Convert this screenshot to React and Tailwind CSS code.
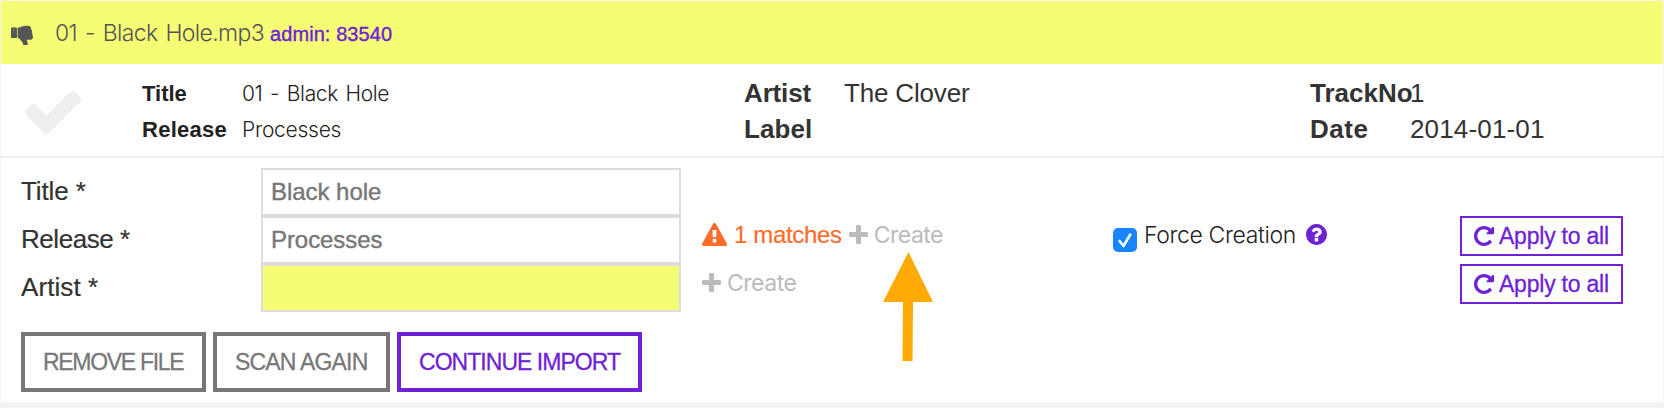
const icons = {
  repeat: {
    box: '128 128 1536 1536',
    d: 'M1664 256v448q0 26-19 45t-45 19h-448q-42 0-59-40-17-39 14-69l138-138q-148-137-349-137-104 0-198.5 40.5t-163.5 109.5-109.5 163.5-40.5 198.5 40.5 198.5 109.5 163.5 163.5 109.5 198.5 40.5q119 0 225-52t179-147q7-10 23-12 15 0 25 9l137 138q9 8 9.5 20.5t-7.5 22.5q-109 132-264 204.5t-327 72.5q-156 0-298-61t-245-164-164-245-61-298 61-298 164-245 245-164 298-61q147 0 284.5 55.5t244.5 156.5l130-129q29-31 70-14 39 17 39 59z',
  },
  check: {
    box: '121 334 1550 1188',
    d: 'M1671 566q0 40-28 68l-724 724-136 136q-28 28-68 28t-68-28l-136-136-362-362q-28-28-28-68t28-68l136-136q28-28 68-28t68 28l294 295 656-657q28-28 68-28t68 28l136 136q28 28 28 68z',
  },
  plus: {
    box: '192 128 1408 1408',
    d: 'M1600 736v192q0 40-28 68t-68 28h-416v416q0 40-28 68t-68 28h-192q-40 0-68-28t-28-68v-416h-416q-40 0-68-28t-28-68v-192q0-40 28-68t68-28h416v-416q0-40 28-68t68-28h192q40 0 68 28t28 68v416h416q40 0 68 28t28 68z',
  },
  warning: {
    box: '0 0 1792 1664',
    d: 'M1024 1375v-190q0-14-9.5-23.5t-22.5-9.5h-192q-13 0-22.5 9.5t-9.5 23.5v190q0 14 9.5 23.5t22.5 9.5h192q13 0 22.5-9.5t9.5-23.5zm-2-374l18-459q0-12-10-19-13-11-24-11h-220q-11 0-24 11-10 7-10 21l17 457q0 10 10 16.5t24 6.5h185q14 0 23.5-6.5t10.5-16.5zm-14-934l768 1408q35 63-2 126-17 29-46.5 46t-63.5 17h-1536q-34 0-63.5-17t-46.5-46q-37-63-2-126l768-1408q17-31 47-49t65-18 65 18 47 49z',
  },
  question: {
    box: '128 128 1536 1536',
    d: 'M1024 1376v-192q0-14-9-23t-23-9h-192q-14 0-23 9t-9 23v192q0 14 9 23t23 9h192q14 0 23-9t9-23zm256-672q0-88-55.5-163t-138.5-116-170-41q-243 0-371 213-15 24 8 42l132 100q7 6 19 6 16 0 25-12 53-68 86-92 34-24 86-24 48 0 85.5 26t37.5 59q0 38-20 61t-68 45q-63 28-115.5 86.5t-52.5 125.5v36q0 14 9 23t23 9h192q14 0 23-9t9-23q0-19 21.5-49.5t54.5-49.5q32-18 49-28.5t46-35 44.5-48 28-60.5 12.5-81zm384 192q0 209-103 385.5t-279.5 279.5-385.5 103-385.5-103-279.5-279.5-103-385.5 103-385.5 279.5-279.5 385.5-103 385.5 103 279.5 279.5 103 385.5z',
  },
  thumbsDown: {
    box: '64 128 1600 1536',
    d: 'M290 576q0 14-10 24t-24 10-24-10-10-24 10-24 24-10 24 10 10 24zm206 512v-640q0-26-19-45t-45-19h-304q-26 0-45 19t-19 45v640q0 26 19 45t45 19h304q26 0 45-19t19-45zm1113-149q55 61 55 149-1 78-57.5 135t-134.5 57h-277q4 14 8 24t11 22 10 18q18 37 27 57t19 58.5 10 76.5q0 24-.5 39t-5 45-12 50-24 45-40 40.5-60 26-82.5 10.5q-26 0-45-19-20-20-34-50t-19.5-52-12.5-61q-9-42-13.5-60.5t-17.5-48.5-31-48q-33-33-101-120-49-64-101-121t-76-59q-25-2-43-20.5t-18-43.5v-641q0-26 19-44.5t45-19.5q35-1 158-44 77-26 120.5-39.5t121.5-29 144-15.5h129q133 2 197 78 58 69 49 181 39 37 54 94 17 61 0 117 46 61 43 137 0 32-15 76z',
  },
};

function Icon({ name, className }) {
  return (
    <svg viewBox={icons[name].box} preserveAspectRatio="none" fill="currentColor" className={`block shrink-0 ${className}`}>
      <path d={icons[name].d} />
    </svg>
  );
}

function Fact({ label, value, labelClass, valueClass = '' }) {
  return (
    <div className="flex">
      <dt className={`w-[100px] shrink-0 font-bold ${labelClass}`}>{label}</dt>
      <dd className={valueClass}>{value}</dd>
    </div>
  );
}

function FormRow({ label, labelClass, value, valueClass = '', fieldClass = 'bg-white', children }) {
  return (
    <div className="flex h-12 items-start">
      <label className={`w-[240px] shrink-0 text-[26px] leading-[47px] [-webkit-text-stroke:0.2px] ${labelClass}`}>{label}</label>
      <div className={`h-12 w-[420px] shrink-0 border-2 border-[#dddddd] pl-[8px] text-[24px] leading-[43px] text-[#777777] [-webkit-text-stroke:0.4px] ${fieldClass} ${valueClass}`}>
        {value}
      </div>
      {children}
    </div>
  );
}

function Create() {
  return (
    <span className="flex items-center text-[#bbbbbb]">
      <Icon name="plus" className="h-[19px] w-[19px]" />
      <span className="relative top-px ml-[6px] font-['Inter',sans-serif] text-[23px] font-normal tracking-[-0.5px]">Create</span>
    </span>
  );
}

function ApplyToAll() {
  return (
    <button className="flex h-10 w-[163px] shrink-0 items-center border-2 border-[#6e22d4] pl-[12px] text-[23px] leading-[36px] tracking-[-0.22px] text-[#6e22d4] [-webkit-text-stroke:0.3px]">
      <Icon name="repeat" className="h-[20px] w-[20px]" />
      <span className="ml-[5px] whitespace-nowrap">Apply to all</span>
    </button>
  );
}

export default function App() {
  return (
    <div className="relative h-[408px] w-[1664px] overflow-hidden bg-[#f4f4f4] px-px pt-px font-['Liberation_Sans',Arial,sans-serif] text-[#333333]">
      <div className="h-[401px] bg-white">
        <header className="flex h-[63px] items-center bg-[#f5fd74] pl-[10px]">
          <Icon name="thumbsDown" className="mt-[3px] h-[21px] w-[22px] text-[#555555]" />
          <div className="mt-[2px] ml-[22px] flex items-baseline whitespace-nowrap">
            <span className="font-['Inter',sans-serif] text-[23px] font-light tracking-[-0.65px] text-[#555555] [word-spacing:2.2px]">01 - Black Hole.mp3</span>
            <span className="ml-[6px] text-[20px] tracking-[0.08px] text-[#6e22d4] [-webkit-text-stroke:0.4px]">admin: 83540</span>
          </div>
        </header>

        <section className="flex h-[94px] border-b-2 border-[#eeeeee] pt-[11px] leading-[36px] whitespace-nowrap">
          <div className="w-[141px] shrink-0 pt-[16px] pl-[24px]">
            <Icon name="check" className="h-[43px] w-[56px] text-[#eeeeee]" />
          </div>
          <dl className="w-[602px] shrink-0 pt-px text-[#222222]">
            <Fact label="Title" value="01 - Black Hole" labelClass="text-[22px]" valueClass="font-['Inter',sans-serif] text-[21px] font-[350] tracking-[-0.35px] [word-spacing:2px]" />
            <Fact label="Release" value="Processes" labelClass="text-[22px] tracking-[0.26px]" valueClass="font-['Inter',sans-serif] text-[21px] font-[350] tracking-[-0.25px]" />
          </dl>
          <dl className="w-[566px] shrink-0 text-[26px]">
            <Fact label="Artist" value="The Clover" labelClass="tracking-[-0.15px]" valueClass="tracking-[-0.17px]" />
            <Fact label="Label" value="" labelClass="tracking-[0.08px]" />
          </dl>
          <dl className="text-[26px]">
            <Fact label="TrackNo" value="1" labelClass="" />
            <Fact label="Date" value="2014-01-01" labelClass="tracking-[0.5px]" valueClass="tracking-[0.16px]" />
          </dl>
        </section>

        <form className="pt-[10px] pl-[20px] whitespace-nowrap">
          <FormRow label="Title *" labelClass="tracking-[-0.1px]" value="Black hole" valueClass="tracking-[-0.04px]" />
          <FormRow label="Release *" labelClass="tracking-[-0.45px]" value="Processes" valueClass="tracking-[-0.07px]">
            <div className="flex w-[432px] shrink-0 items-center pl-[21px] leading-[36px]">
              <span className="flex items-center text-[#ff6c2a]">
                <Icon name="warning" className="h-[23px] w-[25px]" />
                <span className="relative top-px ml-[7px] text-[24px] tracking-[-0.34px] [-webkit-text-stroke:0.2px]">1 matches</span>
              </span>
              <span className="ml-[7px]">
                <Create />
              </span>
            </div>
            <div className="flex w-[347px] shrink-0 items-center leading-[36px] text-[#222222]">
              <span className="mt-[12px] flex h-6 w-6 items-center justify-center rounded-[5px] bg-[#1685ff]">
                <svg viewBox="0 0 24 24" className="h-6 w-6" fill="none" stroke="white" strokeWidth="2.6" strokeLinecap="round" strokeLinejoin="round">
                  <path d="M6.5 13L10.5 18L17.3 6.5" />
                </svg>
              </span>
              <span className="relative top-px ml-[7px] font-['Inter',sans-serif] text-[23px] font-[350] tracking-[-0.37px]">Force Creation</span>
              <Icon name="question" className="ml-[10px] h-[21px] w-[21px] text-[#6e22d4]" />
            </div>
            <ApplyToAll />
          </FormRow>
          <FormRow label="Artist *" labelClass="tracking-[0.08px]" value="" fieldClass="bg-[#f5fd74]">
            <div className="w-[779px] shrink-0 pl-[21px] leading-[36px]">
              <Create />
            </div>
            <ApplyToAll />
          </FormRow>

          <div className="mt-[20px] flex gap-[7px] text-[23px] leading-[52px] [-webkit-text-stroke:0.3px]">
            <button className="w-[185px] border-4 border-[#777777] pl-[18px] text-left tracking-[-1.3px] text-[#777777]">REMOVE FILE</button>
            <button className="w-[177px] border-4 border-[#777777] pl-[18px] text-left tracking-[-0.81px] text-[#777777]">SCAN AGAIN</button>
            <button className="w-[245px] border-4 border-[#6e22d4] pl-[18px] text-left tracking-[-0.96px] text-[#6e22d4]">CONTINUE IMPORT</button>
          </div>
        </form>
      </div>

      <svg viewBox="0 0 50 109" className="absolute top-[252px] left-[883px] h-[109px] w-[50px]" fill="#ffaa05">
        <path d="M25.5 0L50 50H30L29.5 109H19.5L20 50H0Z" />
      </svg>
    </div>
  );
}
